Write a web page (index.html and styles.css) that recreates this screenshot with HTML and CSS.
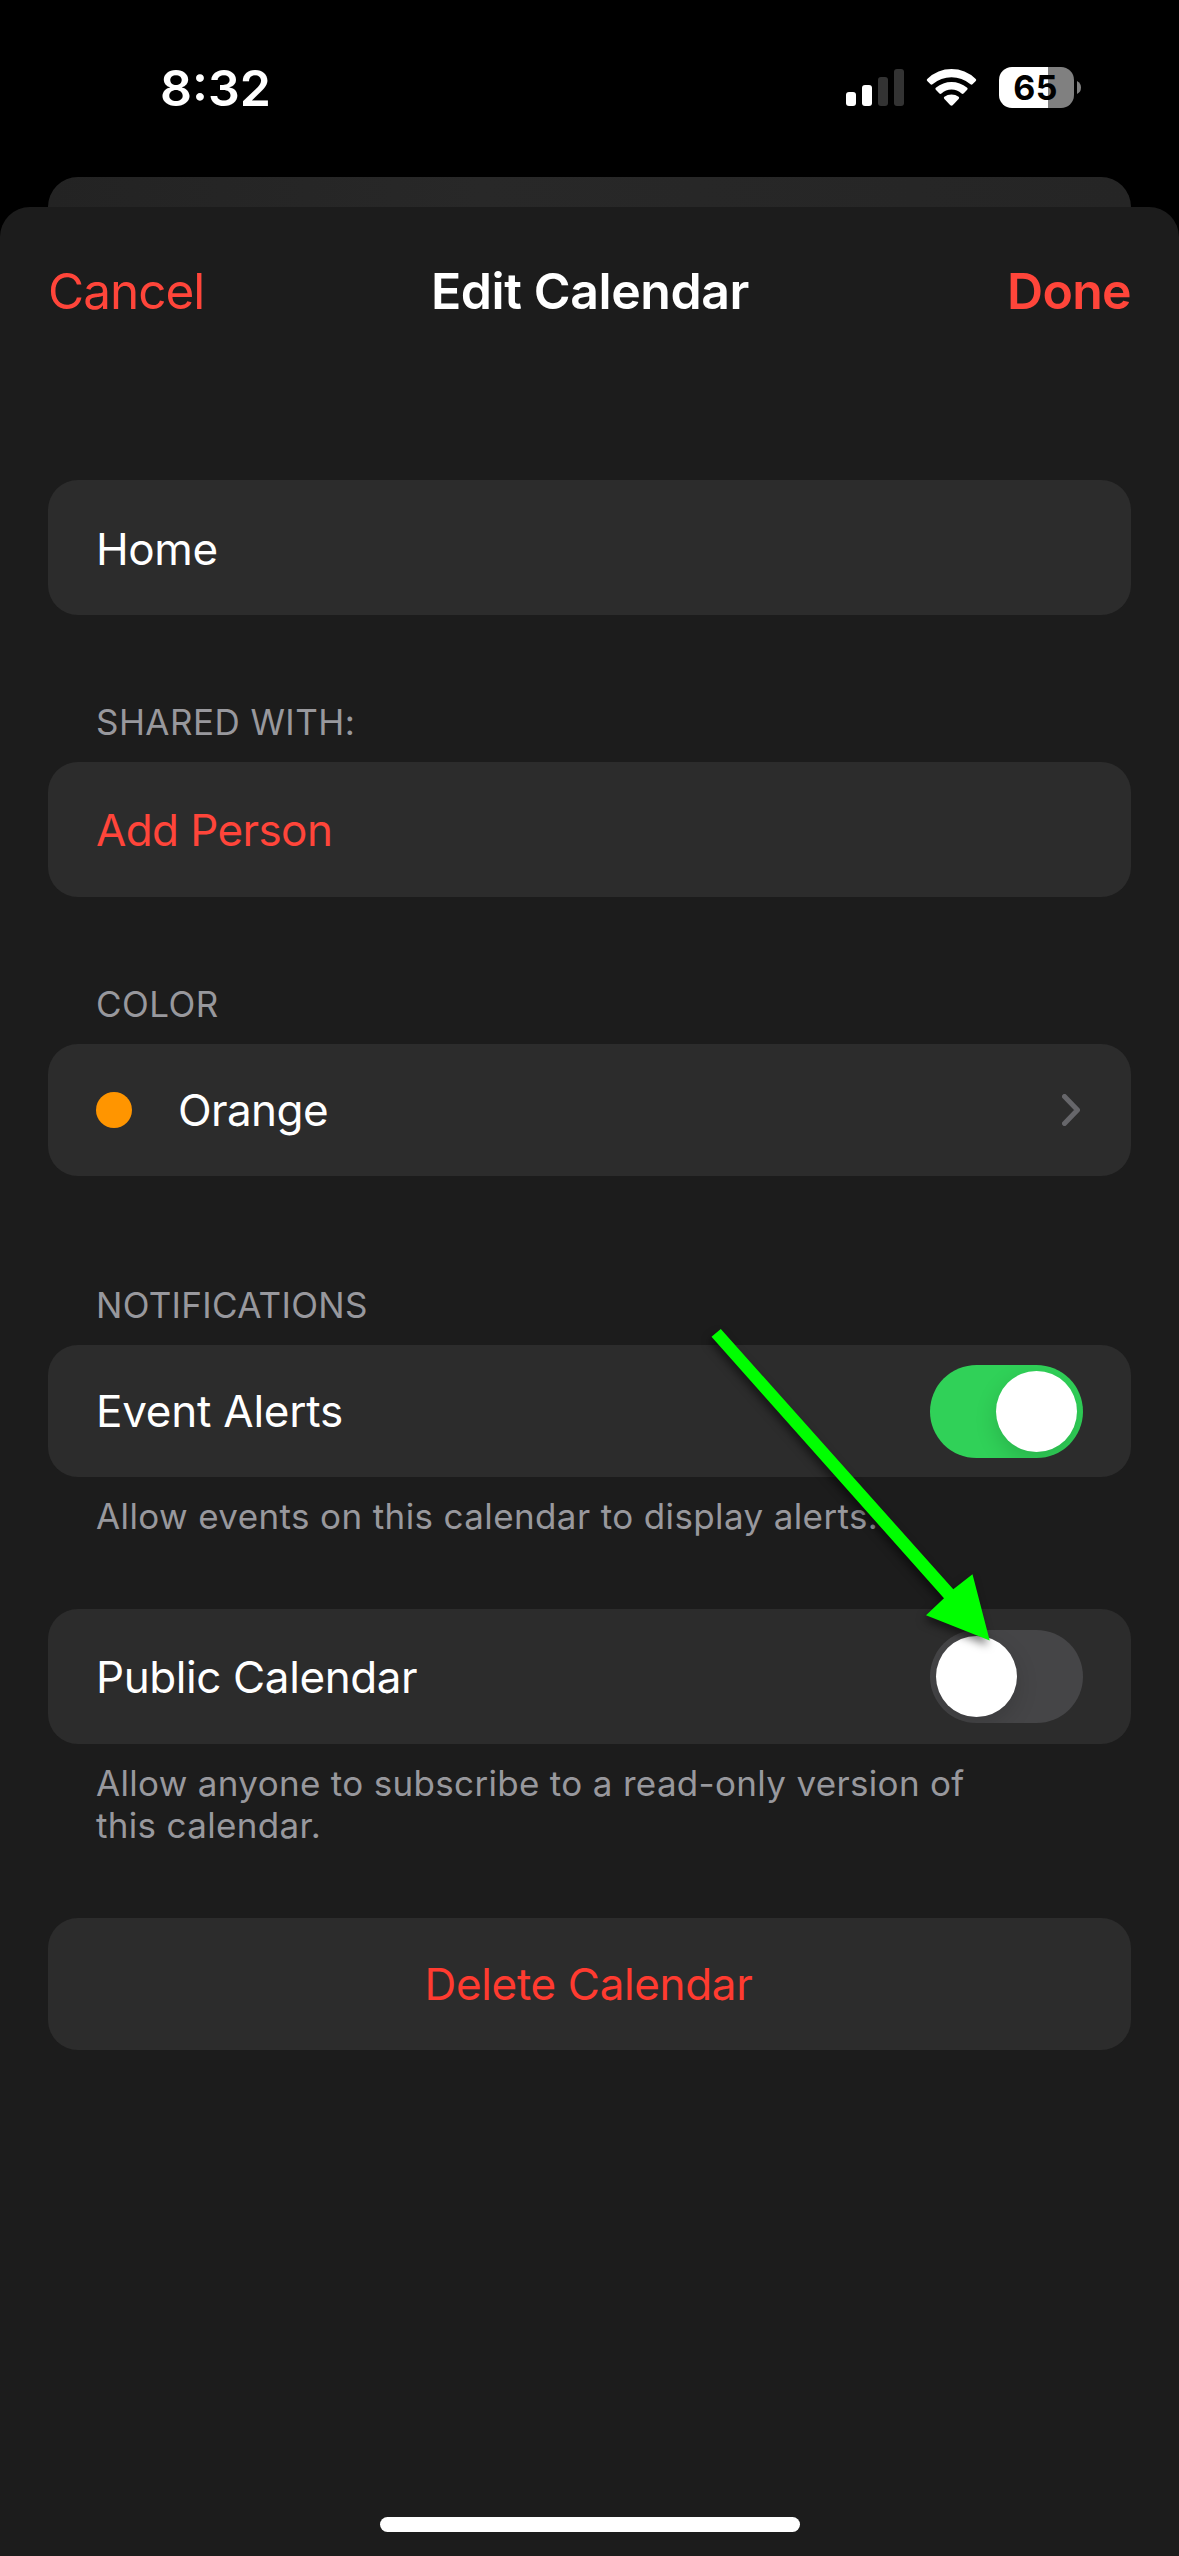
FILE: index.html
```html
<!DOCTYPE html>
<html lang="en">
<head>
<meta charset="utf-8">
<title>Edit Calendar</title>
<link rel="stylesheet" href="styles.css">
</head>
<body>
<div class="screen">
  <header class="status">
    <span class="time">8:32</span>
    <div class="indicators">
      <svg class="signal" viewBox="0 0 58 37">
        <rect x="0" y="23" width="10" height="14" rx="3" fill="#fff"/>
        <rect x="16" y="16" width="10" height="21" rx="3" fill="#fff"/>
        <rect x="32" y="8" width="10" height="29" rx="3" fill="#333"/>
        <rect x="48" y="0" width="10" height="37" rx="3" fill="#333"/>
      </svg>
      <svg class="wifi" viewBox="0 0 153 112" fill="#fff">
        <path d="M3 30Q35 0 76.500 0T150 30Q153 33 150 36L140 46Q137 49 134 46Q108 25 76.500 25T19 46Q16 49 13 46L3 36Q0 33 3 30Z"/>
        <path d="M29 57Q51 39 76.500 39T124 57Q127 60 124 63L113 74Q110 77 107 74Q94 62 76.500 62T46 74Q43 77 40 74L29 63Q26 60 29 57Z"/>
        <path d="M55 84Q64 77 76.500 77T98 84Q101 87 98 91L80 110Q76.500 113 73 110L55 91Q52 87 55 84Z"/>
      </svg>
      <div class="battery">
        <div class="battery-body">65</div>
        <svg class="battery-nub" viewBox="0 0 4 13"><path d="M0 0Q4 2 4 6.500T0 13Z" fill="#808080"/></svg>
      </div>
    </div>
  </header>
  <div class="back-sheet"></div>
  <main class="sheet">
    <nav class="nav">
      <span class="nav-cancel">Cancel</span>
      <h1 class="nav-title">Edit Calendar</h1>
      <span class="nav-done">Done</span>
    </nav>
    <div class="form">
      <section class="group group-name">
        <div class="card card-tall card-name">Home</div>
      </section>
      <section class="group group-shared">
        <h2 class="label">SHARED WITH:</h2>
        <div class="card card-tall accent">Add Person</div>
      </section>
      <section class="group group-color">
        <h2 class="label">COLOR</h2>
        <div class="card">
          <span class="dot"></span>
          <span class="color-name">Orange</span>
          <svg class="chevron" viewBox="0 0 18 32"><path d="M2.500 2.500L15.500 16L2.500 29.500" fill="none" stroke="#66666a" stroke-width="5" stroke-linecap="round" stroke-linejoin="round"/></svg>
        </div>
      </section>
      <section class="group group-alerts">
        <h2 class="label label-notifications">NOTIFICATIONS</h2>
        <div class="card"><span class="wide">Event Alerts</span><span class="switch switch-on"><span class="thumb"></span></span></div>
        <p class="note note-alerts">Allow events on this calendar to display alerts.</p>
      </section>
      <section class="group group-public">
        <div class="card card-tall"><span>Public Calendar</span><span class="switch"><span class="thumb"></span></span></div>
        <p class="note">Allow anyone to subscribe to a read-only version of<br>this calendar.</p>
      </section>
      <section class="group group-delete">
        <div class="card card-center danger">Delete Calendar</div>
      </section>
    </div>
    <div class="home-indicator"></div>
  </main>
  <svg class="arrow" viewBox="0 0 300 330"><path d="M11.500 16.700L20.800 9L253.300 269.300L272.500 254.300L289.700 320.500L226 295.300L244 278.300Z" fill="#0f0"/></svg>
</div>
</body>
</html>
```
FILE: styles.css
```css
* { box-sizing: border-box; margin: 0; padding: 0; }
body { background: #000; }
.screen {
  position: relative;
  display: flex;
  flex-direction: column;
  width: 1179px;
  height: 2556px;
  overflow: hidden;
  background: #000;
  color: #fff;
  font-family: Inter, "Liberation Sans", sans-serif;
  font-size: 44px;
  letter-spacing: -0.4px;
}

/* Status bar */
.status {
  display: flex;
  align-items: center;
  justify-content: space-between;
  height: 177px;
  padding: 0 98px 2px 160px;
}
.time { font-size: 50px; font-weight: 600; letter-spacing: 0; line-height: 60px; }
.indicators { display: flex; align-items: center; }
.signal { width: 58px; height: 37px; margin-right: 22px; }
.wifi { width: 51px; height: 37px; margin-right: 22px; }
.battery { display: flex; align-items: center; gap: 3px; }
.battery-body {
  width: 75px;
  height: 41px;
  border-radius: 13px;
  background: linear-gradient(90deg, #fff 49px, #808080 49px);
  color: #000;
  font-size: 34px;
  font-weight: 700;
  letter-spacing: 0.3px;
  line-height: 42px;
  text-align: center;
  padding-right: 2px;
}
.battery-nub { width: 4px; height: 13px; }

/* Stacked sheets */
.back-sheet {
  height: 60px;
  margin: 0 48px -30px;
  border-radius: 30px 30px 0 0;
  background: linear-gradient(90deg, #232323, #282828 40%, #252525);
}
.sheet {
  position: relative;
  flex: 1;
  display: flex;
  flex-direction: column;
  border-radius: 30px 30px 0 0;
  background: #1c1c1c;
}
.nav {
  display: grid;
  grid-template-columns: 1fr auto 1fr;
  align-items: center;
  height: 168px;
  padding: 0 48px;
  font-size: 50px;
}
.nav-cancel { color: #ff453a; font-size: 49.500px; letter-spacing: -1px; }
.nav-title { font-size: 50px; font-weight: 600; padding-left: 1px; }
.nav-done { color: #ff453a; font-weight: 600; letter-spacing: -0.700px; text-align: right; }

/* Form groups */
.form { flex: 1; padding: 105px 48px 0; }
.group-shared { margin-top: 86px; }
.group-color { margin-top: 86px; }
.group-alerts { margin-top: 108px; }
.group-public { margin-top: 72px; }
.group-delete { margin-top: 72px; }
.label {
  padding: 0 48px 19px;
  color: #98989d;
  font-size: 35px;
  font-weight: 400;
  letter-spacing: 0.450px;
  line-height: 42px;
}
.label-notifications { letter-spacing: 0.300px; }
.card {
  display: flex;
  align-items: center;
  height: 132px;
  padding: 0 48px;
  border-radius: 30px;
  background: #2c2c2c;
}
.card-tall { height: 135px; }
.card-name { padding-top: 2px; }
.card-center { justify-content: center; }
.accent { color: #ff453a; letter-spacing: -0.600px; }
.danger { color: #ff3b30; letter-spacing: -0.350px; padding-right: 50px; }
.wide { letter-spacing: -0.240px; }
.dot { width: 36px; height: 36px; border-radius: 50%; background: #ff9500; }
.color-name { margin-left: 46px; letter-spacing: -0.600px; }
.chevron { width: 18px; height: 32px; margin-left: auto; margin-right: 3px; }
.note {
  padding: 18px 48px 0;
  color: #98989d;
  font-size: 35px;
  letter-spacing: 0.320px;
  line-height: 42px;
}
.note-alerts { letter-spacing: 0.380px; }

/* Switches */
.switch {
  display: flex;
  width: 153px;
  height: 93px;
  margin-left: auto;
  padding: 6px;
  border-radius: 47px;
  background: #454547;
  overflow: hidden;
}
.switch-on { justify-content: flex-end; background: #30d158; }
.thumb {
  width: 81px;
  height: 81px;
  border-radius: 50%;
  background: #fff;
  box-shadow: 0 8px 22px rgba(0, 0, 0, 0.15);
}

.home-indicator {
  width: 420px;
  height: 15px;
  margin: 0 auto 24px;
  border-radius: 8px;
  background: #fff;
}

/* Pointer laid over the form */
.arrow {
  position: absolute;
  left: 700px;
  top: 1320px;
  width: 300px;
  height: 330px;
  overflow: visible;
  filter: drop-shadow(-2px 5px 4px rgba(0, 0, 0, 0.5));
}
```
